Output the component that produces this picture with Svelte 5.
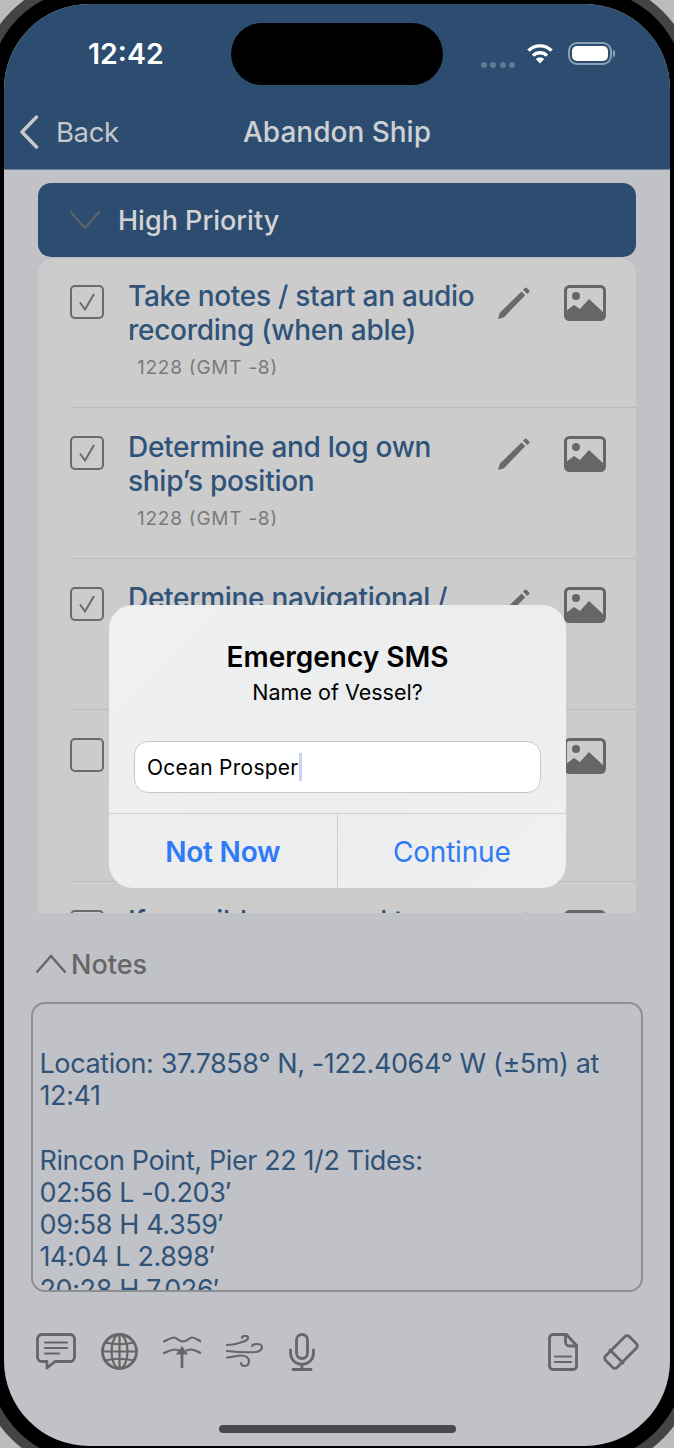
<script>
  const items = [
    { lines: 'Take notes / start an audio recording (when able)', time: '1228 (GMT -8)', checked: true, kind: 'first' },
    { lines: 'Determine and log own ship’s position', time: '1228 (GMT -8)', checked: true, kind: '' },
    { lines: 'Determine navigational /', time: '', checked: true, kind: 'covered' },
    { lines: '', time: '', checked: false, kind: 'tall' },
    { lines: 'If possible, proceed to', time: '', checked: false, kind: '' }
  ];
  const notes = `\nLocation: 37.7858° N, -122.4064° W (±5m) at 12:41\n\nRincon Point, Pier 22 1/2 Tides:\n02:56 L -0.203′\n09:58 H 4.359′\n14:04 L 2.898′\n20:28 H 7.026′`;
</script>

<div class="device">
  <div class="screen">
    <header class="top">
      <div class="status">
        <span class="clock">12:42</span>
        <div class="status-right">
          <div class="dots"><i></i><i></i><i></i><i></i></div>
          <svg class="wifi" width="28" height="21" viewBox="0 0 28 21" aria-hidden="true">
            <path d="M14 20.5l-4.2-4.6a6 6 0 0 1 8.4 0z" fill="#fff"/>
            <path d="M7 12.6a10 10 0 0 1 14 0" fill="none" stroke="#fff" stroke-width="3.4"/>
            <path d="M2.4 7.6a16.6 16.6 0 0 1 23.2 0" fill="none" stroke="#fff" stroke-width="3.4"/>
          </svg>
          <div class="battery"><span></span></div>
          <i class="nub"></i>
        </div>
      </div>
      <nav class="nav">
        <div class="back">
          <svg width="20" height="34" viewBox="0 0 20 34" aria-hidden="true"><path d="M17.5 2L3 17l14.5 15" fill="none" stroke="#c6c8cc" stroke-width="3.4" stroke-linecap="round" stroke-linejoin="round"/></svg>
          <span>Back</span>
        </div>
        <h1>Abandon Ship</h1>
      </nav>
    </header>

    <div class="island"></div>

    <section class="checklist">
      <div class="priority">
        <svg width="32" height="20" viewBox="0 0 32 20" aria-hidden="true"><path d="M1.5 1.5L16 18 30.5 1.5" fill="none" stroke="#5e6467" stroke-width="2"/></svg>
        <span>High Priority</span>
      </div>
      <ul class="card">
        {#each items as item, i}
          <li class="item" class:first={item.kind === 'first'} class:tall={item.kind === 'tall'} class:covered={item.kind === 'covered'}>
            <span class="box">
              {#if item.checked}
                <svg width="22" height="22" viewBox="0 0 22 22" aria-hidden="true"><path d="M4 11.5l5 7L18 3" fill="none" stroke="#6a6a6a" stroke-width="2"/></svg>
              {/if}
            </span>
            <div class="copy">
              <div class="title">{item.lines}</div>
              {#if item.time}<div class="time"><span>{item.time}</span></div>{/if}
            </div>
            <svg class="pencil" width="34" height="34" viewBox="0 0 34 34" aria-hidden="true">
              <path d="M1 33l1.800-6.200L24.500 5.500l3.700 3.700L7 31.200z" fill="#6a6a6a"/>
              <path d="M26 3.700l1.700-1.700a1.500 1.500 0 0 1 2.100 0l2.200 2.200a1.500 1.500 0 0 1 0 2.100L30.300 8z" fill="#6a6a6a"/>
            </svg>
            <svg class="photo" width="42" height="36" viewBox="0 0 42 36" aria-hidden="true">
              <rect x="1.5" y="1.5" width="39" height="33" rx="4" fill="none" stroke="#666" stroke-width="3"/>
              <circle cx="12" cy="11" r="4" fill="#666"/>
              <path d="M2 34V26l8-6 6 4 9-10 15 14v6a1 1 0 0 1-1 1H3z" fill="#666"/>
            </svg>
          </li>
        {/each}
      </ul>
    </section>

    <section class="notes">
      <div class="notes-head">
        <svg width="32" height="20" viewBox="0 0 32 20" aria-hidden="true"><path d="M1.5 18.5L16 2l14.5 16.5" fill="none" stroke="#666" stroke-width="2.4"/></svg>
        <span>Notes</span>
      </div>
      <div class="notes-box"><pre>{notes}</pre></div>
    </section>

    <footer class="tools">
      <div class="tool-group">
        <svg width="40" height="37" viewBox="0 0 40 37" aria-hidden="true">
          <path d="M6 1.500h28a4.500 4.500 0 0 1 4.500 4.500v18a4.500 4.500 0 0 1-4.500 4.500H19l-8 6.500v-6.500H6A4.500 4.500 0 0 1 1.500 24V6A4.500 4.500 0 0 1 6 1.500z" class="ic"/>
          <path d="M9 9.500h22M9 15h22M9 20.500h14" class="ic thin"/>
        </svg>
        <svg width="37" height="37" viewBox="0 0 37 37" aria-hidden="true">
          <circle cx="18.500" cy="18.500" r="17" class="ic"/>
          <ellipse cx="18.500" cy="18.500" rx="8" ry="17" class="ic thin"/>
          <path d="M18.500 1.500v34M1.500 18.500h34M4 9.500q14.500 3.500 29 0M4 27.500q14.500-3.500 29 0" class="ic thin"/>
        </svg>
        <svg width="38" height="32" viewBox="0 0 38 32" aria-hidden="true">
          <path d="M1 5.500C5 3.500 8 1.500 11 1.500C14 1.500 16 5.500 20 5.500C24 5.500 26 1.500 29 1.500C32 1.500 35 4 38 5.500" class="ic thin"/>
          <path d="M1 17C5 15.500 9 13.500 12 13.500C13.500 13.500 14.500 14 15.500 14.500M23.500 14.500C25 14 26 13.500 28 13.500C31 13.500 34 15.500 38 17" class="ic thin"/>
          <path d="M19 31V16" class="ic"/>
          <path d="M19 10l6 8.500H13z" fill="#666"/>
        </svg>
        <svg width="38" height="33" viewBox="0 0 38 33" aria-hidden="true">
          <path d="M1 10C8 10 14 8 19 6C23 4.500 23 1 19.500 .800C17.500 .700 16 1.700 16 3" class="ic thin"/>
          <path d="M1 16C10 17 22 17.500 30 17C35 16.500 36 13 36 12.500C36 9.500 33 9 31 9C28 9 26 10.500 26 11" class="ic thin"/>
          <path d="M1 22.500C6 22.500 10 20.500 15 20.500C20 20.500 23 23 23 26.500C23 29.500 20.500 31 18.500 31C16.500 31 15 29.500 15 28" class="ic thin"/>
        </svg>
        <svg width="26" height="38" viewBox="0 0 26 38" aria-hidden="true">
          <rect x="7.500" y="1.500" width="11" height="24" rx="5.500" class="ic"/>
          <path d="M1.500 17v3a11.500 11.500 0 0 0 23 0v-3M13 31.500v5M4 36.500h18" class="ic"/>
        </svg>
      </div>
      <div class="tool-group right">
        <svg width="30" height="38" viewBox="0 0 30 38" aria-hidden="true">
          <path d="M5 1.500h13.500l10 11V33a3.500 3.500 0 0 1-3.500 3.500H5A3.500 3.500 0 0 1 1.500 33V5A3.500 3.500 0 0 1 5 1.500z" class="ic"/>
          <path d="M17.500 1.500V9a4 4 0 0 0 4 4h7" class="ic"/>
          <path d="M7 23.500h16M7 29h16" class="ic thin"/>
        </svg>
        <svg width="36" height="36" viewBox="0 0 36 36" aria-hidden="true">
          <path d="M22 2.500a3 3 0 0 1 4.200 0l7.300 7.300a3 3 0 0 1 0 4.200L14 33.500a3 3 0 0 1-4.200 0l-7.300-7.300a3 3 0 0 1 0-4.200z" class="ic"/>
          <path d="M7 16l13 13" class="ic"/>
        </svg>
      </div>
    </footer>

    <div class="home"></div>

    <div class="dialog" role="dialog">
      <div class="dialog-body">
        <h2>Emergency SMS</h2>
        <p>Name of Vessel?</p>
        <div class="field"><span>Ocean Prosper</span><i class="caret"></i></div>
      </div>
      <div class="actions">
        <button class="strong">Not Now</button>
        <button>Continue</button>
      </div>
    </div>
  </div>
</div>

<style>
  :global(body) { margin: 0; }
  .device {
    width: 674px;
    height: 1448px;
    background: #bcbcba;
    overflow: hidden;
    padding: 4px 4px 2px;
    box-sizing: border-box;
    font-family: Inter, "Liberation Sans", sans-serif;
  }
  .screen {
    position: relative;
    height: 1442px;
    background: #c1c2c7;
    border-radius: 85px;
    overflow: hidden;
    box-shadow: 0 0 0 15px #000, 0 0 0 25px #444;
    display: flex;
    flex-direction: column;
  }
  .top {
    height: 165px;
    flex: none;
    background: #2c4d70;
    border-bottom: 1px solid #6f8499;
    box-sizing: content-box;
  }
  .status {
    height: 101px;
    display: flex;
    justify-content: space-between;
    padding: 0 0 0 84px;
  }
  .clock {
    margin-top: 33px;
    color: #fff;
    font-size: 28.5px;
    line-height: 34px;
    font-weight: 600;
  }
  .status-right {
    display: flex;
    align-items: flex-start;
    padding: 38px 55px 0 0;
  }
  .dots { display: flex; gap: 3.4px; margin-top: 20px; margin-right: 11px; }
  .dots i { width: 6px; height: 6px; border-radius: 50%; background: #5f7a94; }
  .wifi { margin-right: 14px; margin-top: 1px; }
  .battery {
    width: 44px;
    height: 23px;
    border: 2px solid #8aa0b6;
    border-radius: 9px;
    box-sizing: border-box;
    padding: 2px;
  }
  .battery span { display: block; height: 100%; background: #fff; border-radius: 5px; }
  .nub { width: 2px; height: 7px; background: #8aa0b6; margin: 8px 0 0 1px; border-radius: 0 2px 2px 0; }
  .nav {
    height: 62px;
    position: relative;
    display: flex;
    align-items: center;
    justify-content: center;
  }
  .back {
    position: absolute;
    left: 15px;
    top: 10px;
    display: flex;
    align-items: center;
    gap: 17px;
    color: #c6c8cc;
    font-size: 27.5px;
    line-height: 34px;
    letter-spacing: -0.4px;
  }
  h1 {
    margin: -8px 0 0;
    color: #cfd0d3;
    font-size: 28px;
    font-weight: 500;
  }
  .island {
    position: absolute;
    left: 227px;
    top: 19px;
    width: 212px;
    height: 62px;
    background: #000;
    border-radius: 31px;
  }
  .checklist {
    padding: 13px 34px 0;
    flex: none;
  }
  .priority {
    height: 74px;
    background: #2c4d70;
    border-radius: 13px;
    display: flex;
    align-items: center;
    gap: 17px;
    padding: 0 0 0 31px;
    color: #d3d4d6;
    font-size: 27px;
    font-weight: 500;
  }
  .card {
    list-style: none;
    margin: 2px 0 0;
    padding: 0;
    height: 654px;
    overflow: hidden;
    background: #ccc;
    border-radius: 14px 14px 0 0;
  }
  .item {
    margin-left: 33px;
    padding: 22px 0 32px;
    border-bottom: 1px solid #b9babb;
    display: flex;
    align-items: flex-start;
  }
  .item.first { padding-top: 20px; }
  .item.covered { height: 150px; padding-bottom: 0; box-sizing: content-box; height: 128px; }
  .item.tall { height: 172px; padding-bottom: 0; box-sizing: border-box; }
  .box {
    flex: none;
    width: 34px;
    height: 34px;
    box-sizing: border-box;
    border: 2.5px solid #6b6b6b;
    border-radius: 5px;
    margin: 6px 24px 0 -1px;
    display: flex;
    align-items: center;
    justify-content: center;
  }
  .copy { width: 360px; flex: none; }
  .title {
    color: #2f5379;
    font-size: 28px;
    font-weight: 450;
    line-height: 34px;
    min-height: 68px;
    letter-spacing: -0.28px;
  }
  .time {
    height: 18px;
    margin-top: 10px;
    padding-left: 9px;
    overflow: hidden;
    color: #7a7a7a;
    font-size: 19px;
    line-height: 22px;
    letter-spacing: 0.75px;
  }
  .pencil { flex: none; margin: 7px 0 0 9px; }
  .photo { flex: none; margin: 6px 0 0 33px; }
  .notes { flex: none; padding: 36px 27px 0; }
  .notes-head {
    height: 30px;
    display: flex;
    align-items: center;
    gap: 4px;
    padding-left: 4px;
    color: #666;
    font-size: 27px;
    font-weight: 500;
  }
  .notes-box {
    margin-top: 23px;
    height: 290px;
    box-sizing: border-box;
    border: 2px solid #8e8f92;
    border-radius: 14px;
    padding: 12px 0 0 6.5px;
    overflow: hidden;
  }
  pre {
    margin: 0;
    font: inherit;
    white-space: pre-wrap;
    color: #2f5379;
    font-size: 27px;
    line-height: 32.2px;
    letter-spacing: -0.4px;
  }
  .tools {
    flex: none;
    margin-top: 40px;
    padding: 0 31px 0 32px;
    height: 39px;
    display: flex;
    justify-content: space-between;
    align-items: center;
  }
  .tool-group { display: flex; align-items: center; gap: 25px; }
  .ic { fill: none; stroke: #666; stroke-width: 2.8; stroke-linecap: round; stroke-linejoin: round; }
  .ic.thin { stroke-width: 2.2; }
  .home {
    flex: none;
    align-self: center;
    width: 237px;
    height: 8px;
    margin-top: 54px;
    border-radius: 4px;
    background: #46484b;
  }
  .dialog {
    position: absolute;
    left: 105px;
    top: 601px;
    width: 457px;
    height: 283px;
    border-radius: 24px;
    background: linear-gradient(135deg, #eff0f0, #ecedee 55%, #f0f0f0);
    display: flex;
    flex-direction: column;
    overflow: hidden;
    color: #000;
  }
  .dialog-body { height: 208px; padding: 0 25px; box-sizing: content-box; text-align: center; flex: none; }
  h2 {
    margin: 34px 0 0;
    font-size: 28px;
    line-height: 36px;
    font-weight: 600;
  }
  p {
    margin: 5px 0 0;
    font-size: 21.5px;
    line-height: 24px;
  }
  .field {
    margin-top: 37px;
    height: 52px;
    box-sizing: border-box;
    border: 1px solid #c8c8c8;
    border-radius: 14px;
    background: #fff;
    display: flex;
    align-items: center;
    padding-left: 12px;
    font-size: 21px;
    letter-spacing: 0.25px;
    text-align: left;
  }
  .caret { width: 3px; height: 28px; background: #c9d4f5; margin-left: 0; }
  .actions {
    flex: 1;
    display: grid;
    grid-template-columns: 1fr 1fr;
    border-top: 1px solid #cfd0d1;
  }
  button {
    border: 0;
    background: none;
    font: inherit;
    font-size: 28px;
    color: #2f7bf6;
    letter-spacing: -0.2px;
    padding: 2px 0 0;
  }
  button.strong { font-weight: 600; border-right: 1px solid #cfd0d1; }
</style>
